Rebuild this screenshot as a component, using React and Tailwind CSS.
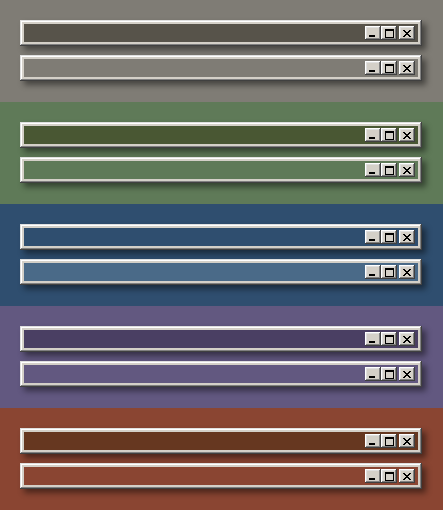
import React from "react";

const bevel =
  "shadow-[inset_-1px_-1px_#404040,inset_1px_1px_#ffffff,inset_-2px_-2px_#808080,inset_2px_2px_#dfdfdf]";

const themes = [
  { bg: "bg-[#7f7c75]", fills: ["bg-[#57534a]", "bg-[#7f7c75]"] },
  { bg: "bg-[#5f7a58]", fills: ["bg-[#495733]", "bg-[#5f7a58]"] },
  { bg: "bg-[#2f4e6f]", fills: ["bg-[#2f4e6f]", "bg-[#4a6a88]"] },
  { bg: "bg-[#625880]", fills: ["bg-[#4a3f63]", "bg-[#625880]"] },
  { bg: "bg-[#8a4532]", fills: ["bg-[#663720]", "bg-[#8a4532]"] },
];

const CloseGlyph = () => {
  const rows = [
    [0, 1, 6, 7],
    [1, 2, 5, 6],
    [2, 3, 4, 5],
    [3, 4],
    [2, 3, 4, 5],
    [1, 2, 5, 6],
    [0, 1, 6, 7],
  ];

  return (
    <svg width="8" height="7" viewBox="0 0 8 7" shapeRendering="crispEdges">
      {rows.map((cols, y) =>
        cols.map((x) => (
          <rect key={`${x}-${y}`} x={x} y={y} width="1" height="1" fill="#000" />
        ))
      )}
    </svg>
  );
};

function TitleButton({ children, className = "" }) {
  return (
    <div
      className={`flex h-[14px] w-[16px] items-center justify-center bg-[#d4d0c8] ${bevel} ${className}`}
    >
      {children}
    </div>
  );
}

function TitleBar({ fill }) {
  return (
    <div
      className={`w-[402px] bg-[#d4d0c8] p-[4px] ${"shadow-[inset_-1px_-1px_#404040,inset_1px_1px_#dfdfdf,inset_-2px_-2px_#808080,inset_2px_2px_#ffffff,4px_4px_6px_rgba(0,0,0,0.45)]"}`}
    >
      <div className={`flex h-[18px] items-center justify-end pr-[3px] ${fill}`}>
        <TitleButton>
          <div className="mt-[6px] mr-[2px] h-[2px] w-[6px] bg-black" />
        </TitleButton>
        <TitleButton>
          <div className="h-[9px] w-[9px] border border-t-2 border-black" />
        </TitleButton>
        <TitleButton className="ml-[2px]">
          <CloseGlyph />
        </TitleButton>
      </div>
    </div>
  );
}

export default function App() {
  return (
    <div className="flex h-[510px] w-[443px] flex-col">
      {themes.map((theme, i) => (
        <div
          key={i}
          className={`flex h-[102px] flex-col gap-[9px] pt-[20px] pl-[20px] ${theme.bg}`}
        >
          {theme.fills.map((fill, j) => (
            <TitleBar key={j} fill={fill} />
          ))}
        </div>
      ))}
    </div>
  );
}
